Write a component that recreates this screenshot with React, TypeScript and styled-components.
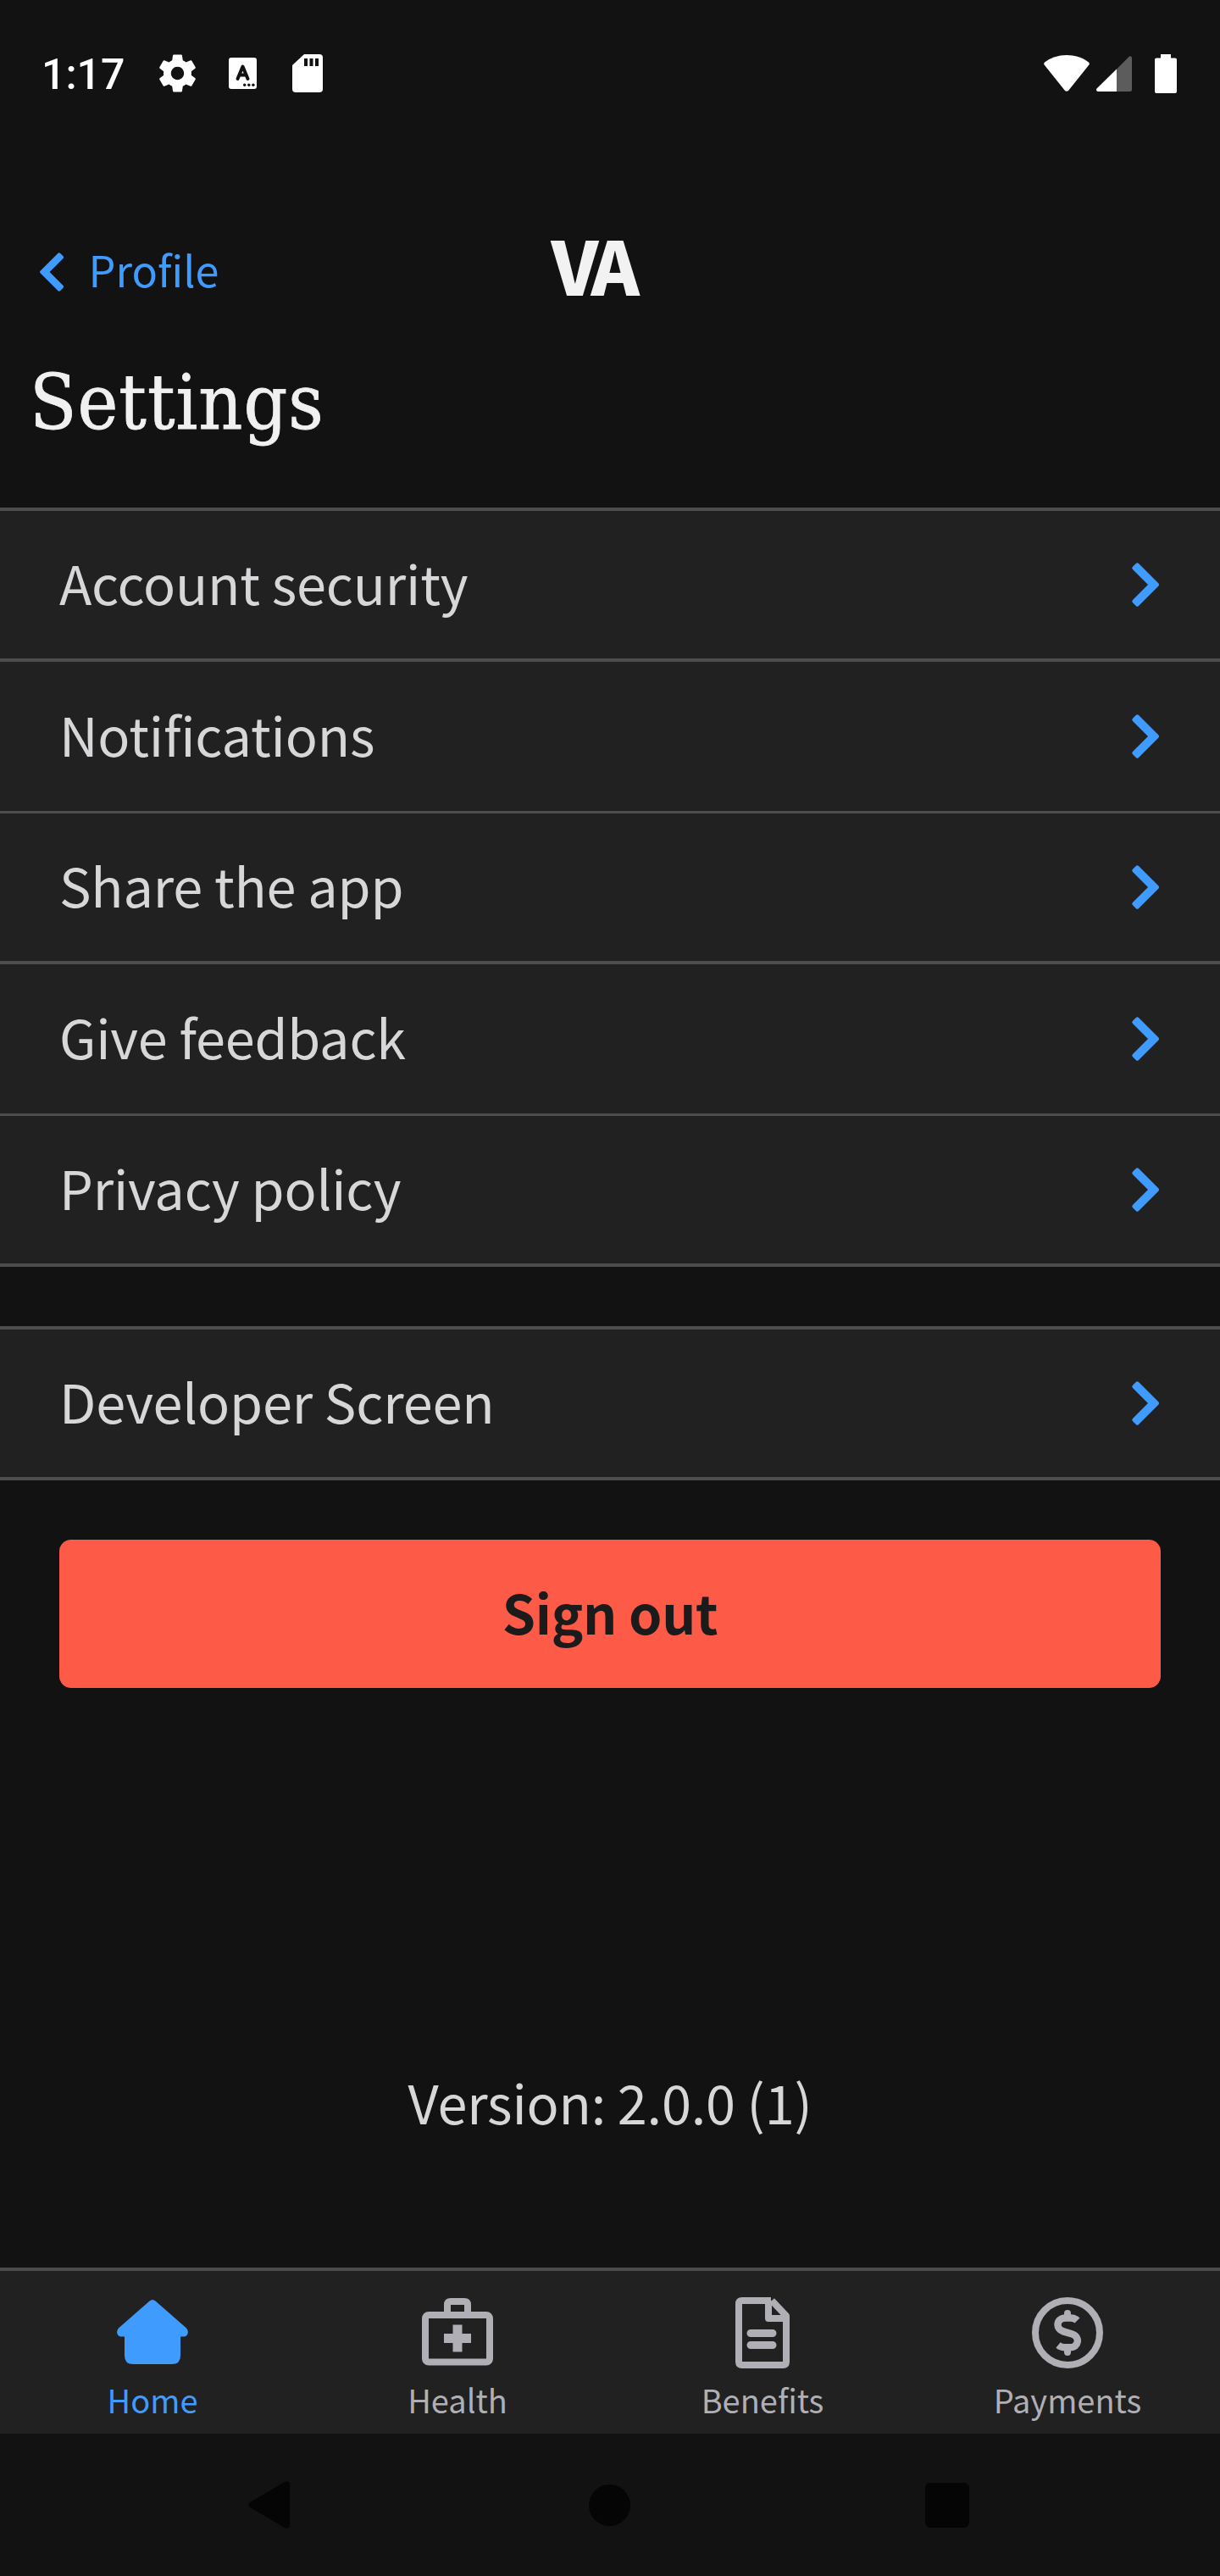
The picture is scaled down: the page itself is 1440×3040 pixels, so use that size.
import React from "react";
import styled, { createGlobalStyle } from "styled-components";

const SANS = '"Noto Sans CJK SC", "Noto Sans CJK JP", "Noto Sans", sans-serif';
const BLUE = "#409bff";
const LINE = "#4d4d4d";
const PANEL = "#212121";
const MUTED = "#afafb5";

const GlobalStyle = createGlobalStyle`
  html, body { margin: 0; background: #121212; }
  * { box-sizing: border-box; }
  svg { display: block; overflow: visible; flex: none; }
`;

const Screen = styled.div`
  width: 1440px;
  height: 3040px;
  display: flex;
  flex-direction: column;
  background: #121212;
  color: #d7d7d9;
  font-family: ${SANS};
  overflow: hidden;
`;

const StatusBar = styled.header`
  height: 173px;
  padding: 0 51px 0 49px;
  display: flex;
  align-items: center;
  justify-content: space-between;
`;

const StatusGroup = styled.div`
  display: flex;
  align-items: center;
`;

const Clock = styled.span`
  width: 139px;
  padding-top: 2px;
  font: 500 50px/56px Roboto, sans-serif;
  color: #fff;
`;

const Gap = styled.span<{ $w: number }>`
  width: ${(p) => p.$w}px;
`;

const NavBar = styled.nav`
  height: 221px;
  padding: 74px 47px 0;
  display: grid;
  grid-template-columns: 1fr auto 1fr;
  align-items: center;
`;

const BackLink = styled.a`
  display: flex;
  align-items: center;
  gap: 29px;
  color: ${BLUE};
`;

const BackLabel = styled.span`
  padding-bottom: 5px;
  font-size: 50.4px;
  line-height: 60px;
`;

const Logo = styled.span`
  width: 105px;
  margin-right: 34px;
  padding-bottom: 20px;
  color: #f2f2f2;
  font-size: 87px;
  font-weight: 900;
  line-height: 90px;
  letter-spacing: -7px;
  white-space: nowrap;
`;

const Title = styled.h1`
  height: 205px;
  margin: 0;
  padding: 26px 0 0 35px;
  color: #f0f0f0;
  font: 400 90px/110px "DejaVu Serif Condensed", "DejaVu Serif", serif;
  font-stretch: condensed;
  letter-spacing: 1px;
  -webkit-text-stroke: 0.8px #f0f0f0;
`;

const List = styled.section<{ $gap: number }>`
  display: flex;
  flex-direction: column;
  margin-bottom: ${(p) => p.$gap}px;
  border-top: 4px solid ${LINE};
  background: ${PANEL};
`;

const Row = styled.div<{ $h: number; $line: number }>`
  height: ${(p) => p.$h}px;
  padding: 0 72px 0 70px;
  display: flex;
  align-items: center;
  justify-content: space-between;
  border-bottom: ${(p) => p.$line}px solid ${LINE};
`;

const RowLabel = styled.span`
  padding-bottom: 6px;
  font-size: 63px;
  line-height: 80px;
  letter-spacing: -0.18px;
`;

const SignOut = styled.button`
  height: 175px;
  margin: 0 70px;
  padding: 0 0 6px;
  border: 0;
  border-radius: 14px;
  background: #fd5b47;
  color: #1b1b1b;
  font-family: ${SANS};
  font-size: 63px;
  font-weight: 700;
  line-height: 80px;
  letter-spacing: -0.3px;
`;

const Version = styled.p`
  flex: 1;
  margin: 0;
  padding-top: 448px;
  text-align: center;
  font-size: 63px;
  line-height: 80px;
  letter-spacing: -0.22px;
`;

const TabBar = styled.nav`
  height: 196px;
  display: grid;
  grid-template-columns: repeat(4, 1fr);
  border-top: 4px solid #4a4b4a;
  background: ${PANEL};
`;

const Tab = styled.div<{ $active?: boolean }>`
  display: flex;
  flex-direction: column;
  align-items: center;
  padding-top: 23px;
  gap: 5px;
  color: ${(p) => (p.$active ? BLUE : MUTED)};
  font-size: 38px;
  line-height: 56px;
`;

const SystemNav = styled.footer`
  height: 168px;
  padding: 0 296px 0 293px;
  display: flex;
  align-items: center;
  justify-content: space-between;
`;

const HomeButton = styled.span`
  width: 49px;
  height: 49px;
  margin-left: 5px;
  border-radius: 50%;
  background: #050505;
`;

const RecentsButton = styled.span`
  width: 52px;
  height: 53px;
  border-radius: 6px;
  background: #050505;
`;

const CHEVRON_PATH =
  "M1 8Q-.7 6.300 1 4.800L4.800 1Q6.300 -.7 8 1L31.500 24.500Q32.800 26 31.500 27.500L8 51Q6.300 52.700 4.800 51L1 47.200Q-.7 45.700 1 44L19 26Z";

const Chevron = () => (
  <svg width="32" height="52" viewBox="0 0 32 52" fill={BLUE}>
    <path d={CHEVRON_PATH} />
  </svg>
);

const BackChevron = () => (
  <svg width="28.500" height="46" viewBox="0 0 32 52" fill={BLUE}>
    <path transform="translate(32 0) scale(-1 1)" d={CHEVRON_PATH} />
  </svg>
);

const Gear = () => (
  <svg width="43" height="45" viewBox="2.2 2 19.600 20" fill="#fff">
    <path d="M19.430 12.980c.04-.32.07-.64.07-.98s-.03-.66-.07-.98l2.110-1.650c.19-.15.24-.42.12-.64l-2-3.460c-.12-.22-.39-.3-.61-.22l-2.490 1c-.52-.4-1.080-.73-1.690-.98l-.38-2.650C14.460 2.180 14.250 2 14 2h-4c-.25 0-.46.18-.49.42l-.38 2.650c-.61.25-1.170.59-1.690.98l-2.490-1c-.23-.09-.49 0-.61.22l-2 3.460c-.13.22-.07.49.12.64l2.110 1.650c-.04.32-.07.65-.07.98s.03.66.07.98l-2.110 1.650c-.19.15-.24.42-.12.64l2 3.460c.12.22.39.3.61.22l2.490-1c.52.4 1.080.73 1.690.98l.38 2.650c.03.24.24.42.49.42h4c.25 0 .46-.18.49-.42l.38-2.650c.61-.25 1.170-.59 1.690-.98l2.490 1c.23.09.49 0 .61-.22l2-3.460c.12-.22.07-.49-.12-.64l-2.110-1.650zM12 15.500c-1.930 0-3.500-1.570-3.500-3.500s1.570-3.500 3.500-3.500 3.500 1.570 3.500 3.500-1.570 3.500-3.500 3.500z" />
  </svg>
);

const InputIcon = () => (
  <svg width="33" height="37" viewBox="0 0 33 37">
    <rect width="33" height="37" rx="3" fill="#fff" />
    <path d="M10.500 25 16.500 10.500 22.500 25M12.500 20.500H20.500" fill="none" stroke="#121212" strokeWidth="4" strokeLinecap="round" strokeLinejoin="round" />
    <g fill="#121212">
      <circle cx="18.700" cy="32.300" r="1.700" />
      <circle cx="23.800" cy="32.300" r="1.700" />
      <circle cx="28.900" cy="32.300" r="1.700" />
    </g>
  </svg>
);

const SdCard = () => (
  <svg width="36" height="45" viewBox="0 0 36 45">
    <path d="M14 0H32Q36 0 36 4V41Q36 45 32 45H4Q0 45 0 41V13Z" fill="#fff" />
    <path d="M14 5h4v9h-4zM20.500 5h4v9h-4zM27 5h4v9h-4z" fill="#121212" />
  </svg>
);

const Wifi = () => (
  <svg width="54" height="43" viewBox="0 0 54 43" fill="#fff">
    <path d="M1 8.500Q12 0 27 0T53 8.500Q54.500 10 53 12L29 42Q27 43.500 25 42L1 12Q-.5 10 1 8.500Z" />
  </svg>
);

const Signal = () => (
  <svg width="42" height="42" viewBox="0 0 42 42">
    <path d="M24 15.500 38.500 1Q42 -1 42 3V40Q42 42 40 42H24Z" fill="#5c5c5c" />
    <path d="M24 15.500V42H2Q-1 41 .5 38.500Z" fill="#fff" />
  </svg>
);

const Battery = () => (
  <svg width="26" height="46" viewBox="0 0 26 46" fill="#fff">
    <path d="M7 0H19V4.500H24Q26 4.500 26 6.500V44Q26 46 24 46H2Q0 46 0 44V6.500Q0 4.500 2 4.500H7Z" />
  </svg>
);

const HomeIcon = () => (
  <svg width="84" height="96" viewBox="0 0 84 96" fill="currentColor">
    <path d="M38.500 12.500Q42 9.500 45.500 12.500L81.500 44Q84.500 47 83.700 51Q82 54.500 79 54.500H75V77Q75 87 65 87H19Q9 87 9 77V54.500H5Q2 54.500 .3 51Q-.5 47 2.500 44Z" />
  </svg>
);

const HealthIcon = () => (
  <svg width="84" height="96" viewBox="0 0 84 96" fill="none" stroke="currentColor" strokeWidth="8">
    <rect x="4" y="29" width="76" height="55.500" rx="4" />
    <path d="M30 29V17Q30 13 34 13H50Q54 13 54 17V29" />
    <path d="M42 40.500V72.500M26 56.500H58" strokeWidth="11" />
  </svg>
);

const BenefitsIcon = () => (
  <svg width="64" height="96" viewBox="0 0 64 96" fill="none" stroke="currentColor" strokeWidth="8" strokeLinejoin="round">
    <path d="M42 12H8Q4 12 4 16V84Q4 88 8 88H56Q60 88 60 84V30L43 12M39 12V33H60" />
    <path d="M18 50.500H44M18 64.500H44" strokeWidth="9" strokeLinecap="round" />
  </svg>
);

const PaymentsIcon = () => (
  <svg width="84" height="96" viewBox="0 0 84 96" fill="none" stroke="currentColor" strokeWidth="8">
    <circle cx="42" cy="50" r="38" />
    <path d="M42 27V32M42 68V73" strokeLinecap="round" />
    <path d="M53.500 35.500Q50.500 32.500 46 32.500H40C28.500 32.500 27.500 45.500 37 48.300L47.500 51.500C57 54.500 55.500 67.300 45 67.300H39Q34.500 67.300 31 64.500" strokeWidth="8.500" />
  </svg>
);

const settings = [
  { label: "Account security", h: 178, line: 4 },
  { label: "Notifications", h: 179, line: 3 },
  { label: "Share the app", h: 178, line: 4 },
  { label: "Give feedback", h: 179, line: 3 },
  { label: "Privacy policy", h: 178, line: 4 },
];

export default function App() {
  return (
    <Screen>
      <GlobalStyle />
      <StatusBar>
        <StatusGroup>
          <Clock>1:17</Clock>
          <Gear />
          <Gap $w={39} />
          <InputIcon />
          <Gap $w={42} />
          <SdCard />
        </StatusGroup>
        <StatusGroup>
          <Wifi />
          <Gap $w={8} />
          <Signal />
          <Gap $w={27} />
          <Battery />
        </StatusGroup>
      </StatusBar>
      <NavBar>
        <BackLink>
          <BackChevron />
          <BackLabel>Profile</BackLabel>
        </BackLink>
        <Logo>VA</Logo>
      </NavBar>
      <Title>Settings</Title>
      <List $gap={70}>
        {settings.map((s) => (
          <Row key={s.label} $h={s.h} $line={s.line}>
            <RowLabel>{s.label}</RowLabel>
            <Chevron />
          </Row>
        ))}
      </List>
      <List $gap={70}>
        <Row $h={178} $line={4}>
          <RowLabel>Developer Screen</RowLabel>
          <Chevron />
        </Row>
      </List>
      <SignOut>Sign out</SignOut>
      <Version>Version: 2.0.0 (1)</Version>
      <TabBar>
        <Tab $active>
          <HomeIcon />
          Home
        </Tab>
        <Tab>
          <HealthIcon />
          Health
        </Tab>
        <Tab>
          <BenefitsIcon />
          Benefits
        </Tab>
        <Tab>
          <PaymentsIcon />
          Payments
        </Tab>
      </TabBar>
      <SystemNav>
        <svg width="49" height="56" viewBox="0 0 49 56" fill="#050505">
          <path d="M2 25 43 1Q49 -1 49 4V52Q49 57 43 55L2 31Q-2 28 2 25Z" />
        </svg>
        <HomeButton />
        <RecentsButton />
      </SystemNav>
    </Screen>
  );
}
